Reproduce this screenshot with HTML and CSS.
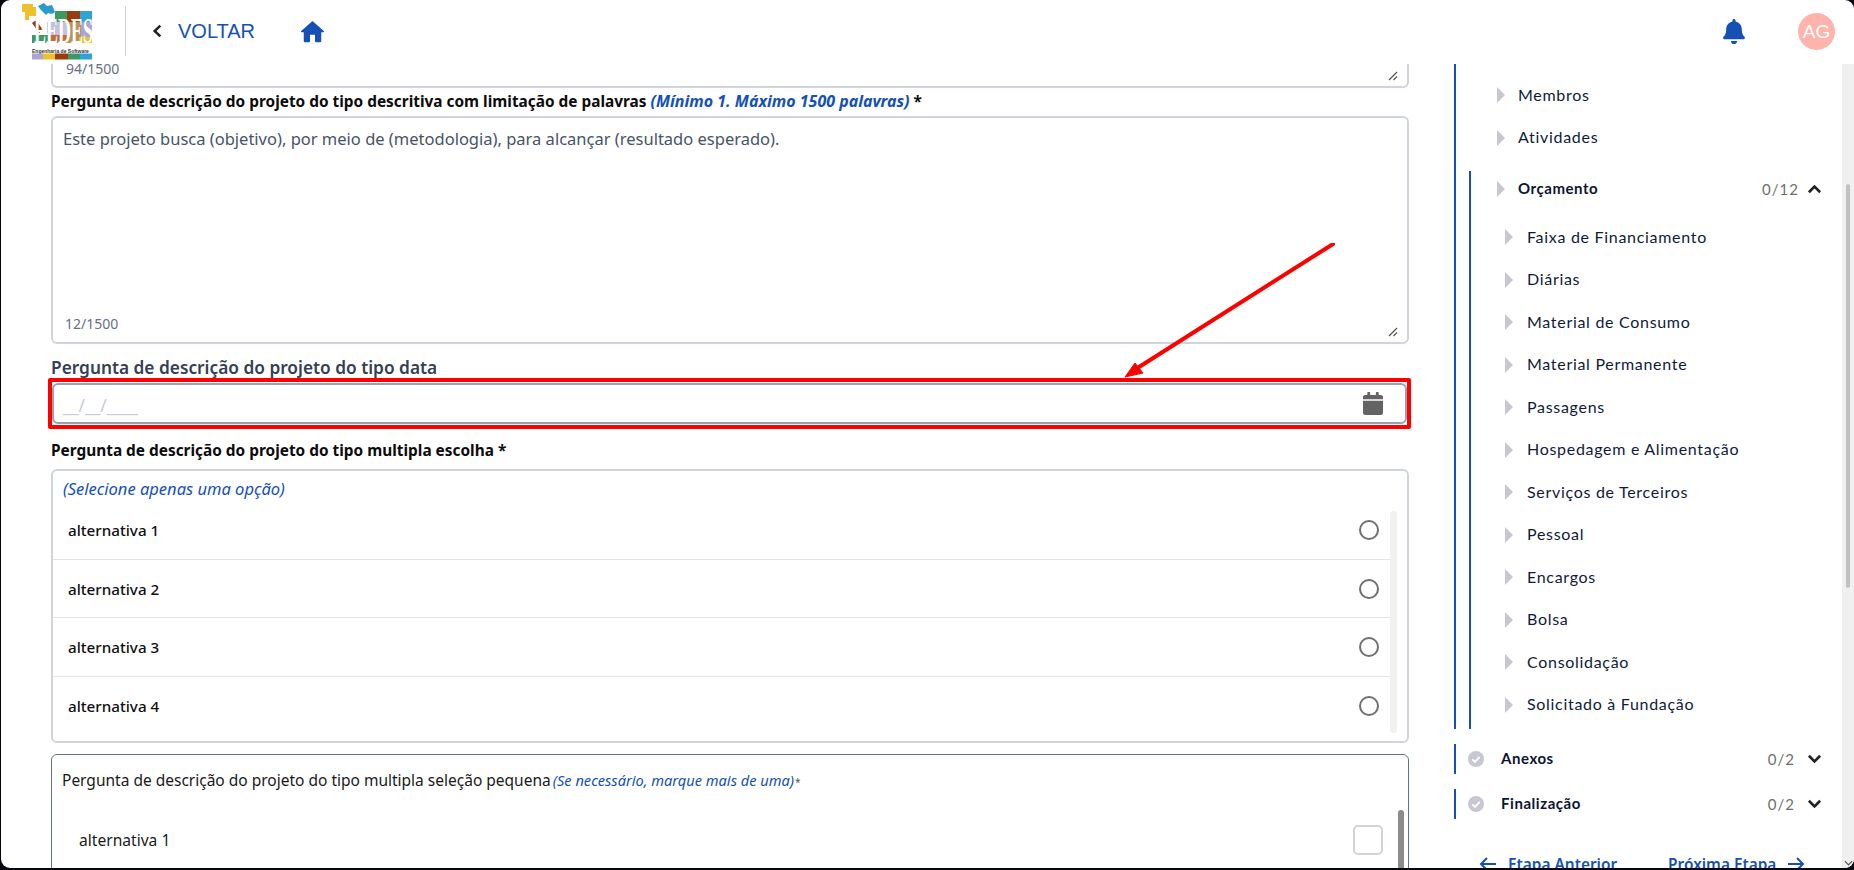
FILE: index.html
```html
<!DOCTYPE html>
<html lang="pt-BR">
<head>
<meta charset="utf-8">
<title>Projeto</title>
<link rel="stylesheet" href="styles.css">
</head>
<body>
<div class="app">
  <header class="topbar">
    <svg class="logo" viewBox="0 0 72 58" width="72" height="58" aria-label="EEDES">
      <rect x="34" y="9" width="12" height="14" fill="#3a9a62"/>
      <rect x="46" y="9" width="13" height="14" fill="#9c3b0b"/>
      <rect x="59" y="9" width="12" height="14" fill="#2fa3d8"/>
      <rect x="26" y="20" width="20" height="14" fill="#c4c2e0"/>
      <rect x="46" y="20" width="14" height="21" fill="#b9935c"/>
      <rect x="60" y="20" width="11" height="15" fill="#a9a6d4"/>
      <rect x="58" y="35" width="13" height="6" fill="#f0c02c"/>
      <rect x="11" y="33" width="19" height="8" fill="#3a9a62"/>
      <rect x="30" y="33" width="16" height="8" fill="#c46a3c"/>
      <path d="M1 2h11v3h3v9H8v4H4v-8H1z" fill="#f0c02c"/>
      <path d="M17 4l6-3 3 3 5-1 3 7-3 2-4-1-2 2-6-6z" fill="#2b9ad0"/>
      <path d="M8 18l8-3 5 5 3 8 4 5H18L15 26 9 22z" fill="#fff"/>
      <path d="M11 21l4-3 7 10-4 3z" fill="#9c3b0b"/>
      <text class="logo-mark" transform="translate(13 41) scale(1 2)">EEDES</text>
      <text class="logo-sub" transform="translate(11 50.5) scale(1 1.2)">Engenharia de Software</text>
      <rect x="11" y="51.5" width="11" height="6" fill="#a9a6d4"/>
      <rect x="22" y="51.5" width="12" height="6" fill="#f0c02c"/>
      <rect x="34" y="51.5" width="13" height="6" fill="#9c3b0b"/>
      <rect x="47" y="51.5" width="12" height="6" fill="#3a9a62"/>
      <rect x="59" y="51.5" width="12" height="6" fill="#2fa3d8"/>
    </svg>
    <span class="divider"></span>
    <svg class="back-icon" viewBox="0 0 12 16" width="10" height="14"><path d="M10 1.5L3.2 8l6.8 6.5" fill="none" stroke="#222" stroke-width="3"/></svg>
    <a class="back-link">VOLTAR</a>
    <svg class="home-icon" viewBox="2 3 20 17" width="25" height="23"><path fill="#1551b4" d="M10 19v-5h4v5c0 .55.45 1 1 1h3c.55 0 1-.45 1-1v-7h1.7c.46 0 .68-.57.33-.87L12.67 3.6c-.38-.34-.96-.34-1.34 0l-8.36 7.53c-.34.3-.13.87.33.87H5v7c0 .55.45 1 1 1h3c.55 0 1-.45 1-1z"/></svg>
    <span class="spacer"></span>
    <svg class="bell-icon" viewBox="0 0 448 512" width="22" height="25"><path fill="#1551b4" d="M224 512c35.32 0 63.97-28.65 63.97-64H160.03c0 35.35 28.65 64 63.97 64zm215.39-149.71c-19.32-20.76-55.47-51.99-55.47-154.29 0-77.7-54.48-139.9-127.94-155.16V32c0-17.67-14.32-32-31.98-32s-31.98 14.33-31.98 32v20.84C118.56 68.1 64.08 130.3 64.08 208c0 102.3-36.15 133.53-55.47 154.29-6 6.45-8.66 14.16-8.61 21.71.11 16.4 12.98 32 32.1 32h383.8c19.12 0 32-15.6 32.1-32 .05-7.55-2.61-15.27-8.61-21.71z"/></svg>
    <span class="avatar">AG</span>
  </header>

  <div class="workspace">
    <main class="form">
      <div class="textarea-stub">
        <span class="counter">94/1500</span>
        <svg class="grip" viewBox="0 0 10 10" width="10" height="10"><path d="M1 9L9 1M5.5 9L9 5.5" stroke="#555" stroke-width="1.2" fill="none"/></svg>
      </div>
      <p class="label label-first">Pergunta de descrição do projeto do tipo descritiva com limitação de palavras <em class="hint-strong">(Mínimo 1. Máximo 1500 palavras)</em> *</p>
      <div class="textarea-box">
        <p class="textarea-text">Este projeto busca (objetivo), por meio de (metodologia), para alcançar (resultado esperado).</p>
        <span class="counter">12/1500</span>
        <svg class="grip" viewBox="0 0 10 10" width="10" height="10"><path d="M1 9L9 1M5.5 9L9 5.5" stroke="#555" stroke-width="1.2" fill="none"/></svg>
      </div>
      <p class="label-date">Pergunta de descrição do projeto do tipo data</p>
      <div class="highlight">
        <div class="date-input">
          <span class="date-mask">__/__/____</span>
          <svg viewBox="0 0 448 512" width="20" height="23"><path fill="#636363" d="M0 464c0 26.5 21.5 48 48 48h352c26.5 0 48-21.5 48-48V192H0v272zM448 112c0-26.5-21.5-48-48-48h-48V16c0-8.8-7.2-16-16-16h-32c-8.8 0-16 7.2-16 16v48H160V16c0-8.8-7.2-16-16-16h-32c-8.8 0-16 7.2-16 16v48H48C21.5 64 0 85.5 0 112v48h448v-48z"/></svg>
        </div>
      </div>
      <p class="label label-choice">Pergunta de descrição do projeto do tipo multipla escolha *</p>
      <section class="choice-box">
        <p class="choice-hint">(Selecione apenas uma opção)</p>
        <div class="choice-list">
          <span class="list-track"></span>
          <div class="choice-row"><span>alternativa 1</span><i class="radio"></i></div>
          <div class="choice-row"><span>alternativa 2</span><i class="radio"></i></div>
          <div class="choice-row"><span>alternativa 3</span><i class="radio"></i></div>
          <div class="choice-row"><span>alternativa 4</span><i class="radio"></i></div>
        </div>
      </section>
      <section class="multi-box">
        <p class="multi-title">Pergunta de descrição do projeto do tipo multipla seleção pequena <em>(Se necessário, marque mais de uma)</em> <small>*</small></p>
        <div class="multi-row"><span>alternativa 1</span><i class="checkbox"></i></div>
        <span class="multi-thumb"></span>
      </section>
    </main>

    <aside class="steps">
      <div class="stage">
        <div class="item"><i class="tri"></i><span>Membros</span></div>
        <div class="item"><i class="tri"></i><span>Atividades</span></div>
        <div class="group">
          <div class="group-head"><i class="tri"></i><strong>Orçamento</strong><span class="count">0/12</span><svg class="chev" viewBox="0 0 16 10" width="15" height="10"><path d="M2 8.5l6-6 6 6" fill="none" stroke="#222" stroke-width="2.8"/></svg></div>
          <div class="sub"><i class="tri"></i><span>Faixa de Financiamento</span></div>
          <div class="sub"><i class="tri"></i><span>Diárias</span></div>
          <div class="sub"><i class="tri"></i><span>Material de Consumo</span></div>
          <div class="sub"><i class="tri"></i><span>Material Permanente</span></div>
          <div class="sub"><i class="tri"></i><span>Passagens</span></div>
          <div class="sub"><i class="tri"></i><span>Hospedagem e Alimentação</span></div>
          <div class="sub"><i class="tri"></i><span>Serviços de Terceiros</span></div>
          <div class="sub"><i class="tri"></i><span>Pessoal</span></div>
          <div class="sub"><i class="tri"></i><span>Encargos</span></div>
          <div class="sub"><i class="tri"></i><span>Bolsa</span></div>
          <div class="sub"><i class="tri"></i><span>Consolidação</span></div>
          <div class="sub"><i class="tri"></i><span>Solicitado à Fundação</span></div>
        </div>
      </div>
      <div class="stage-closed">
        <svg viewBox="0 0 16 16" width="16" height="16"><circle cx="8" cy="8" r="8" fill="#c8c8d2"/><path d="M4.3 8.3l2.6 2.6 4.8-5" fill="none" stroke="#fff" stroke-width="1.8"/></svg>
        <strong>Anexos</strong><span class="count">0/2</span><svg class="chev" viewBox="0 0 16 10" width="15" height="10"><path d="M2 1.5l6 6 6-6" fill="none" stroke="#222" stroke-width="2.8"/></svg>
      </div>
      <div class="stage-closed">
        <svg viewBox="0 0 16 16" width="16" height="16"><circle cx="8" cy="8" r="8" fill="#c8c8d2"/><path d="M4.3 8.3l2.6 2.6 4.8-5" fill="none" stroke="#fff" stroke-width="1.8"/></svg>
        <strong>Finalização</strong><span class="count">0/2</span><svg class="chev" viewBox="0 0 16 10" width="15" height="10"><path d="M2 1.5l6 6 6-6" fill="none" stroke="#222" stroke-width="2.8"/></svg>
      </div>
      <div class="step-nav">
        <a class="nav-btn"><svg viewBox="0 0 18 14" width="18" height="14"><path d="M17 7H2M8 1L2 7l6 6" fill="none" stroke="#1551b4" stroke-width="2"/></svg>Etapa Anterior</a>
        <a class="nav-btn">Próxima Etapa<svg viewBox="0 0 18 14" width="18" height="14"><path d="M1 7h15M10 1l6 6-6 6" fill="none" stroke="#1551b4" stroke-width="2"/></svg></a>
      </div>
    </aside>

    <div class="page-scroll">
      <span class="page-thumb"></span>
      <svg class="page-arrow" viewBox="0 0 10 6" width="9" height="6"><path d="M1 1l4 4 4-4" fill="none" stroke="#555" stroke-width="1.3"/></svg>
    </div>
  </div>

  <svg class="annotation" viewBox="0 0 220 140" width="220" height="140">
    <path d="M209 1L15 124" stroke="#ff0000" stroke-width="4" stroke-linecap="round" fill="none"/>
    <path d="M1 134L11 120L19 130z" fill="#ff0000" stroke="#ff0000" stroke-width="1"/>
  </svg>
</div>
</body>
</html>
```

FILE: styles.css
```css
* { box-sizing: border-box; }
html, body { margin: 0; height: 100%; }
body {
  background: #05060f;
  padding: 0 0 2px 1px;
  font-family: "Noto Sans", sans-serif;
  overflow: hidden;
}
p { margin: 0; }
i { display: block; }

.app {
  position: relative;
  height: 868px;
  background: #fff;
  border-radius: 9px;
  overflow: hidden;
  display: flex;
  flex-direction: column;
}

/* top bar */
.topbar {
  height: 64px;
  flex: none;
  display: flex;
  align-items: center;
  padding: 0 19px 2px 20px;
}
.logo { flex: none; }
.logo-mark { font: 700 18px "Liberation Serif", serif; fill: #fff; }
.logo-sub { font: 700 5px "Liberation Sans", sans-serif; fill: #333; }
.divider { width: 1px; height: 50px; background: #d5d5d5; margin-left: 32px; }
.back-icon { margin-left: 26px; }
.back-link { font: 20px "Liberation Sans", sans-serif; color: #1551b4; margin-left: 16px; }
.home-icon { margin-left: 45px; }
.spacer { flex: 1; }
.bell-icon { margin-right: 1px; }
.avatar {
  width: 37px; height: 37px; border-radius: 50%;
  background: #ffb3ab; color: #fff;
  font: 19px/37px "Liberation Sans", sans-serif;
  text-align: center;
  margin-left: 52px;
}

.workspace { flex: 1; min-height: 0; display: flex; }

/* form column */
.form {
  width: 1453px;
  flex: none;
  padding-left: 50px;
  padding-right: 45px;
}
.textarea-stub, .textarea-box {
  position: relative;
  border: 2px solid #d0d5dd;
  border-radius: 6px;
  background: #fff;
}
.textarea-stub {
  height: 24px;
  border-top: 0;
  border-radius: 0 0 6px 6px;
  padding-left: 13px;
}
.counter { font-size: 14px; line-height: 20px; color: #667085; }
.textarea-stub .counter { display: block; line-height: 10px; }
.grip { position: absolute; right: 9px; bottom: 5px; }
.label {
  font-size: 15.4px;
  font-weight: 700;
  line-height: 20px;
  color: #0c0c0c;
  white-space: nowrap;
}
.label-first { padding-top: 3px; height: 28px; }
.hint-strong { color: #1551b4; font-size: 16px; }
.textarea-box { height: 228px; padding: 10px 10px; }
.textarea-text { font-size: 16.5px; line-height: 21px; color: #475467; height: 184px; }
.textarea-box .counter { margin-left: 2px; }
.label-date {
  font-size: 17.3px;
  font-weight: 600;
  line-height: 22px;
  color: #344054;
  padding-top: 13px;
  height: 34px;
  white-space: nowrap;
}
.highlight {
  margin-left: -3px;
  margin-right: -2px;
  border: 4px solid #ff0000;
  border-radius: 2px;
  padding: 1px 0;
  height: 51px;
}
.date-input {
  height: 41px;
  border: 2px solid #98a2b3;
  border-radius: 6px;
  display: flex;
  align-items: center;
  justify-content: space-between;
  padding: 0 22px 0 9px;
}
.date-mask { font-size: 17.4px; color: #c6cbd4; margin-top: 2px; }
.label-choice { padding-top: 12px; height: 40px; }
.choice-box {
  height: 274px;
  border: 2px solid #d0d5dd;
  border-radius: 6px;
}
.choice-hint {
  font-size: 16.5px; font-style: italic; line-height: 20px;
  color: #1551b4;
  padding: 8px 0 0 10px;
  height: 30px;
}
.choice-list { position: relative; }
.list-track {
  position: absolute; right: 10px; top: 10px;
  width: 7px; height: 222px;
  background: #f1f1f1; border-radius: 3px;
}
.choice-row {
  height: 58.7px;
  margin-right: 17px;
  padding: 0 11px 0 15px;
  display: flex;
  align-items: center;
  justify-content: space-between;
  font-size: 15.2px;
  font-weight: 500;
  color: #101010;
  border-bottom: 1px solid #e4e4e4;
}
.choice-row:last-child { border-bottom: 0; }
.radio {
  width: 20px; height: 20px; border-radius: 50%;
  border: 2px solid #707070;
}
.multi-box {
  position: relative;
  height: 200px;
  margin-top: 11px;
  border: 1px solid #667085;
  border-radius: 6px;
  padding: 15px 0 0 10px;
}
.multi-title { font-size: 15.5px; line-height: 20px; color: #1a1a1a; white-space: nowrap; }
.multi-title em { font-size: 14.6px; color: #1551b4; margin-left: -2px; }
.multi-title small { font-size: 10px; color: #555; margin-left: -3px; }
.multi-row {
  display: flex;
  align-items: center;
  justify-content: space-between;
  height: 30px;
  margin-top: 33px;
  padding: 0 25px 0 17px;
  font-size: 15.6px;
  color: #1a1a1a;
}
.checkbox { width: 30px; height: 30px; border: 2px solid #d0d5dd; border-radius: 5px; }
.multi-thumb {
  position: absolute; right: 4px; top: 55px;
  width: 6px; height: 120px;
  background: #8c8c8c; border-radius: 3px;
}

/* right stepper */
.steps {
  width: 388px;
  flex: none;
  overflow: hidden;
  font-family: "Lato", sans-serif;
  font-size: 16px;
  color: #101b3a;
  letter-spacing: 0.7px;
}
.stage {
  height: 665px;
  border-left: 2px solid #1551b4;
  padding-top: 10px;
}
.tri {
  width: 0; height: 0; flex: none;
  border-left: 8px solid #c7c7d1;
  border-top: 8px solid transparent;
  border-bottom: 8px solid transparent;
}
.item, .sub {
  height: 42.5px;
  display: flex;
  align-items: center;
  gap: 14px;
}
.item { padding-left: 41px; gap: 13px; }
.sub { padding-left: 34px; }
.item span, .sub span { margin-top: -2px; }
.group {
  margin-top: 12px;
  margin-left: 13px;
  border-left: 2px solid #1551b4;
  height: 558px;
}
.group-head {
  height: 45px;
  display: flex;
  align-items: center;
  gap: 13px;
  padding: 0 20px 9px 26px;
}
.group-head strong, .stage-closed strong {
  font-size: 15px;
  font-weight: 700;
  letter-spacing: 0.55px;
  color: #0c1530;
  margin-top: -2px;
}
.count { margin-left: auto; color: #6f6f6f; letter-spacing: 1px; font-size: 15px; padding-right: 1px; }
.chev { flex: none; margin-left: -6px; }
.stage-closed {
  height: 30px;
  margin-top: 15px;
  border-left: 2px solid #1551b4;
  display: flex;
  align-items: center;
  gap: 17px;
  padding: 0 20px 0 12px;
}
.step-nav {
  display: flex;
  gap: 51px;
  margin-top: 33px;
  padding-left: 25px;
}
.nav-btn {
  display: flex;
  align-items: center;
  gap: 11px;
  height: 24px;
  font-family: "Noto Sans", sans-serif;
  font-size: 15.4px;
  font-weight: 600;
  letter-spacing: 0;
  color: #1551b4;
  white-space: nowrap;
}

/* page scrollbar */
.page-scroll {
  position: relative;
  flex: 1;
  background: #f0f0f0;
}
.page-thumb {
  display: block;
  width: 4px;
  height: 404px;
  margin: 120px 0 0 4px;
  background: #c1c1c1;
  border-radius: 2px;
}
.page-arrow { position: absolute; left: 2px; bottom: 2px; }

/* annotation arrow */
.annotation { position: absolute; left: 1123px; top: 243px; pointer-events: none; }
```
